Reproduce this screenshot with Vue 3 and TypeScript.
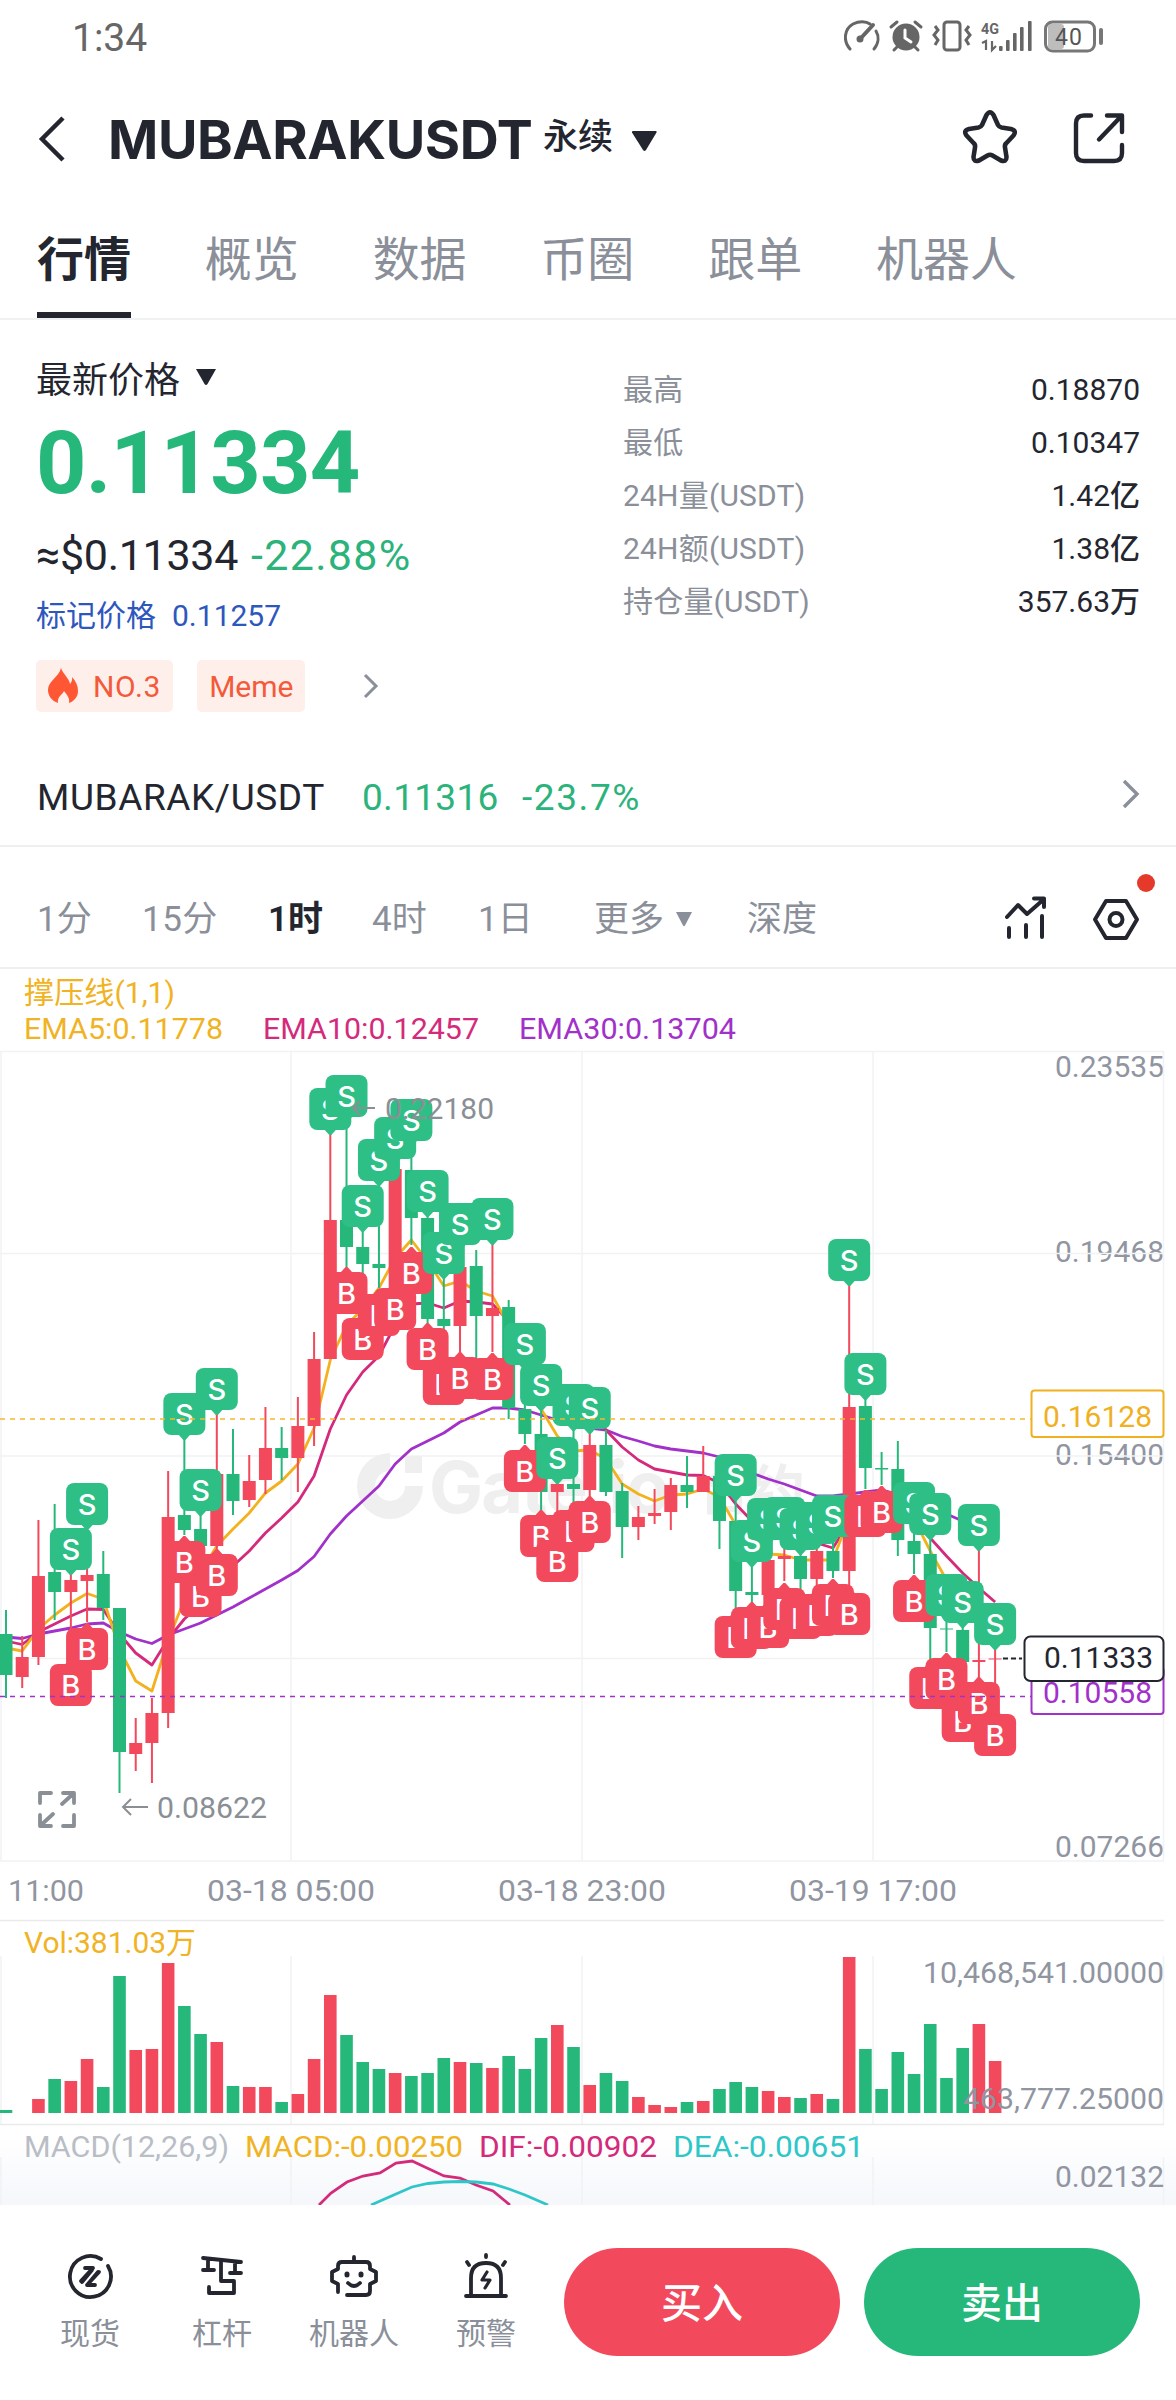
<template>
  <div class="page">
    <!-- 状态栏 -->
    <div class="status">
      <span class="clock">1:34</span>
      <svg class="status-icons" width="262" height="34" viewBox="844 19 262 34">
        <g fill="none" stroke="#666" stroke-width="3" stroke-linecap="round">
          <path d="M850 49 C843 41 844 29 853 24 C859 21 866 21 870 24" />
          <path d="M874 49 C879 43 879 36 876 31" />
          <path d="M861 38 L873 25" stroke-width="4" />
          <circle cx="860" cy="39" r="2" fill="#666" />
        </g>
        <g stroke="#666" stroke-linecap="round">
          <circle cx="906" cy="37" r="13.5" fill="#666" stroke="none" />
          <path d="M891 27 L897 22 M921 27 L915 22 M897 47 L894 50 M915 47 L918 50" stroke-width="3" fill="none" />
          <path d="M905 30 V38 L911 42" stroke="#fff" stroke-width="3" fill="none" />
        </g>
        <g fill="none" stroke="#666" stroke-width="3">
          <rect x="944" y="22" width="16" height="28" rx="3" />
          <path d="M935 26 L938 30 L934 35 L938 40 L935 45 M969 26 L966 30 L970 35 L966 40 L969 45" stroke-width="3" />
        </g>
        <text x="981" y="34" class="net" textLength="18" lengthAdjust="spacingAndGlyphs">4G</text>
        <path d="M982 43 L986 41 V50 M992 41 V50 L996 46" fill="none" stroke="#666" stroke-width="2.2" />
        <g fill="#666">
          <rect x="999" y="46" width="3.6" height="5" rx="1" />
          <rect x="1006" y="40" width="3.6" height="11" rx="1" />
          <rect x="1013" y="33" width="3.6" height="18" rx="1" />
          <rect x="1020" y="27" width="3.6" height="24" rx="1" />
          <rect x="1028" y="21" width="3.6" height="30" rx="1" />
        </g>
        <rect x="1048" y="24" width="16" height="25" rx="3" fill="#bdbdbd" />
        <rect x="1045.500" y="22" width="49" height="29" rx="7" fill="none" stroke="#777" stroke-width="3" />
        <rect x="1099" y="28" width="4" height="17" rx="2" fill="#777" />
        <text x="1055" y="45" class="battery" textLength="27">40</text>
      </svg>
    </div>

    <!-- 标题 -->
    <header class="header">
      <svg class="back" width="30" height="50" viewBox="0 0 30 50">
        <path d="M26 4 L5 25 L26 46" fill="none" stroke="#23262f" stroke-width="4.500" />
      </svg>
      <h1>MUBARAKUSDT</h1>
      <span class="kind">永续</span>
      <svg class="caret" width="27" height="22" viewBox="0 0 27 22">
        <path d="M2 1 H25 Q26 1 25.500 2.500 L15 20 Q13.500 22 12 20 L1 2.500 Q.500 1 2 1Z" fill="#23262f" />
      </svg>
      <svg class="star" width="60" height="60" viewBox="0 0 60 60">
        <path
          d="M26.500 8 Q30 2.500 33.500 8 L38 18 Q39 20 41.500 20.500 L51 22 Q57 23.500 53.500 28.500 L46 36.500 Q44.500 38 45 40.500 L46.500 50 Q46.500 55.500 41 53.500 L32.500 48.500 Q30 47 27.500 48.500 L19 53.500 Q13.500 55.500 13.500 50 L15 40.500 Q15.500 38 14 36.500 L6.500 28.500 Q3 23.500 9 22 L18.500 20.500 Q21 20 22 18 Z"
          fill="none" stroke="#23262f" stroke-width="4.600" stroke-linejoin="round" />
      </svg>
      <svg class="share" width="54" height="54" viewBox="0 0 54 54">
        <g fill="none" stroke="#23262f" stroke-width="4.400" stroke-linecap="round" stroke-linejoin="round">
          <path d="M19 4.500 H12 Q4 4.500 4 12.500 V42 Q4 50 12 50 H42 Q50 50 50 42 V34" />
          <path d="M35 4.500 H50 V21 M49 5.500 L27 28.500" />
        </g>
      </svg>
    </header>

    <nav class="tabs">
      <span v-for="(t, i) in tabs" :key="t" :class="{ active: i === 0 }">{{ t }}</span>
    </nav>

    <!-- 价格信息 -->
    <section class="quote">
      <div class="left">
        <div class="last-label">
          最新价格
          <svg width="22" height="18" viewBox="0 0 22 18"><path d="M1 1 H21 L12.500 16 Q11 18 9.500 16Z" fill="#23262f" /></svg>
        </div>
        <div class="last">0.11334</div>
        <div class="approx"><span>≈$0.11334</span><span class="green pct">-22.88%</span></div>
        <div class="mark">标记价格<span>0.11257</span></div>
        <div class="tags">
          <span class="tag">
            <svg width="32" height="36" viewBox="0 0 32 36">
              <path
                d="M14 0 C16 6 22 10 23 16 C25 14 25.500 11 25 9 C29 13 31 18 31 23 C31 29 27 33 22 35 C23 30 20 27 17 23 C15 27 10 29 11 35 C5 33 1 28 1 22 C1 13 12 9 14 0Z"
                fill="#ff5733" />
            </svg>
            NO.3
          </span>
          <span class="tag meme">Meme</span>
          <svg class="more" width="16" height="26" viewBox="0 0 16 26">
            <path d="M2 2 L13 13 L2 24" fill="none" stroke="#8a8f99" stroke-width="3" />
          </svg>
        </div>
      </div>
      <dl class="stats">
        <div v-for="s in stats" :key="s.label">
          <dt>{{ s.label }}</dt>
          <dd>{{ s.value }}</dd>
        </div>
      </dl>
    </section>

    <section class="spot">
      <span class="pair">MUBARAK/USDT</span>
      <span class="green spot-price">0.11316</span>
      <span class="green spot-pct">-23.7%</span>
      <svg width="18" height="30" viewBox="0 0 18 30">
        <path d="M2 2 L15 15 L2 28" fill="none" stroke="#8a8f99" stroke-width="3.400" />
      </svg>
    </section>

    <!-- 周期 -->
    <section class="periods">
      <span class="p1">1分</span>
      <span class="p2">15分</span>
      <span class="p3 on">1时</span>
      <span class="p4">4时</span>
      <span class="p5">1日</span>
      <span class="p6">更多<svg width="18" height="15" viewBox="0 0 18 15"><path d="M1 0 H17 L10 13.500 Q9 15 8 13.500Z" fill="#8a8f99" /></svg></span>
      <span class="p7">深度</span>
      <svg class="tool-chart" width="44" height="46" viewBox="1004 897 44 46">
        <g fill="none" stroke="#23262f" stroke-width="4" stroke-linecap="round" stroke-linejoin="round">
          <path d="M1007 919 L1018 907 L1027 916 L1043 902 M1034 900.500 H1044 V909" />
          <path d="M1009 930 V939 M1026 927 V939 M1042 918 V939" />
        </g>
      </svg>
      <svg class="tool-hex" width="66" height="74" viewBox="1091 871 66 74">
        <g fill="none" stroke="#23262f" stroke-width="4" stroke-linejoin="round">
          <path d="M1106 901 H1126 L1137 919.500 L1126 938 H1106 L1095 919.500Z" />
          <circle cx="1116" cy="919.500" r="6.500" />
        </g>
        <circle cx="1146" cy="883" r="9" fill="#e53a2b" />
      </svg>
    </section>

    <!-- K线图 -->
    <svg class="chart" width="1176" height="1236" viewBox="0 969 1176 1236">
      <defs>
        <linearGradient id="fade" x1="0" y1="0" x2="0" y2="1">
          <stop offset="0" stop-color="#fff" />
          <stop offset="1" stop-color="#f5f7fb" />
        </linearGradient>
      </defs>
      <rect x="0" y="2135" width="1176" height="70" fill="url(#fade)" />

      <text v-for="l in labels" :key="l.t + l.x" :x="l.x" :y="l.y" :fill="l.c" :textLength="l.w" lengthAdjust="spacingAndGlyphs">{{ l.t }}</text>

      <g stroke="#f1f2f4" stroke-width="1.500">
        <path d="M0 1051.500 H1164 M0 1253.500 H1164 M0 1456 H1164 M0 1658.500 H1164 M0 1861 H1164" />
        <path v-for="x in gridX" :key="x" :d="`M${x} 1051 V1861 M${x} 1956 V2124 M${x} 2157 V2205`" />
        <path d="M0 1920.500 H1164 M0 2124.500 H1164" stroke="#e9eaec" />
      </g>

      <!-- 水印 -->
      <g fill="#efefef">
        <path d="M390 1453 A33 33 0 1 0 423 1486 H405 A15 15 0 1 1 390 1471Z" />
        <rect x="405" y="1456" width="17" height="17" />
        <text x="429" y="1513" class="wm" textLength="241">Gate.io</text>
        <text x="697" y="1510" class="wm cn" textLength="108">合约</text>
      </g>

      <g fill="none" stroke-width="2.800" stroke-linejoin="round">
        <polyline :points="ema30" stroke="#a131c9" />
        <polyline :points="ema10" stroke="#d42a7c" />
        <polyline :points="ema5" stroke="#f2b11d" />
      </g>

      <g v-for="(k, i) in candles" :key="'k' + i" :fill="k[0] ? RED : GREEN">
        <rect :x="cx(i) - 1" :y="k[1]" width="2" :height="k[4] - k[1]" />
        <rect :x="cx(i) - 6.500" :y="k[2]" width="13" :height="k[3] - k[2]" />
      </g>

      <!-- 买卖点 -->
      <g v-for="(b, n) in badges" :key="'b' + n" :transform="`translate(${cx(b.i)} ${b.y})`">
        <rect x="-21" y="0" width="42" height="42" rx="8" :fill="b.side === 'S' ? '#2ebf86' : RED" />
        <path v-if="b.side === 'S'" d="M-6 41.500 H6 L1 47 H-1Z" fill="#2ebf86" />
        <path v-else d="M-6 .500 H6 L1 -5 H-1Z" :fill="RED" />
        <text x="0" y="32" class="side">{{ b.side }}</text>
      </g>

      <g fill="none" stroke-width="1.700">
        <path d="M0 1419 H1031" stroke="#f5b82e" stroke-dasharray="5 5" />
        <path d="M0 1696.500 H1031" stroke="#a131c9" stroke-dasharray="5 5" />
        <path d="M1003 1658.500 H1022" stroke="#23262f" stroke-dasharray="5 3" stroke-width="2" />
      </g>
      <g fill="#fff" stroke-width="2">
        <rect x="1031.500" y="1390.500" width="132" height="46.500" rx="3" stroke="#f0b01f" />
        <rect x="1031.500" y="1667.500" width="132" height="46.500" rx="3" stroke="#a131c9" />
      </g>
      <text x="1043" y="1427" fill="#f0b01f" textLength="109" lengthAdjust="spacingAndGlyphs">0.16128</text>
      <text x="1043" y="1703" fill="#a131c9" textLength="109" lengthAdjust="spacingAndGlyphs">0.10558</text>
      <rect x="1024.500" y="1636.500" width="139" height="44.500" rx="6" fill="#fff" stroke="#23262f" stroke-width="2" />
      <text x="1044" y="1668" fill="#23262f" textLength="109" lengthAdjust="spacingAndGlyphs">0.11333</text>

      <!-- 最高最低标注、全屏 -->
      <g fill="none" stroke="#8a8f96" stroke-width="2">
        <path d="M375 1108 H353 M360 1101 L353 1108 L360 1115" />
        <path d="M148 1807 H123 M131 1799 L123 1807 L131 1815" />
        <path
          d="M40 1803 V1793 H51 M63 1793 H74 V1803 M74 1793 L62 1804 M40 1815 V1826 H51 M40 1826 L53 1814 M63 1826 H74 V1815"
          stroke-width="3.800" stroke-linecap="round" stroke-linejoin="round" />
      </g>

      <!-- 成交量 -->
      <template v-for="(v, i) in volumes" :key="'v' + i">
        <rect v-if="v" :x="cx(i) - 6.300" :y="v" width="12.600" :height="2113 - v" :fill="candles[i][0] ? RED : GREEN" />
      </template>
      <text v-for="l in overLabels" :key="l.t" :x="l.x" :y="l.y" :fill="l.c" :textLength="l.w" lengthAdjust="spacingAndGlyphs">{{ l.t }}</text>

      <g fill="none" stroke-width="2.800">
        <polyline points="319,2205 331,2193 347,2182 363,2176 380,2173 396,2163 412,2161 427,2168 444,2176 460,2178 476,2185 493,2191 510,2205" stroke="#d42a7c" />
        <polyline points="371,2205 396,2194 412,2187 428,2183.500 444,2182 460,2181.500 476,2182 493,2184 509,2189 525,2195 548,2205" stroke="#2fc6c8" />
      </g>
    </svg>

    <!-- 底部操作栏 -->
    <footer class="bottom">
      <div class="entry">
        <svg width="50" height="50" viewBox="65 2250 50 50">
          <g fill="none" stroke="#23262f" stroke-width="3.800" stroke-linecap="round" stroke-linejoin="round">
            <path d="M101 2259 A20.500 20.500 0 1 0 108 2266" />
            <path d="M85 2268 H93 L81 2281 M95 2285 H87 L99 2272 M92 2270 L82 2282 M88 2284 L98 2272" />
          </g>
        </svg>
        <span>现货</span>
      </div>
      <div class="entry">
        <svg width="50" height="50" viewBox="197 2250 50 50">
          <g fill="none" stroke="#23262f" stroke-width="3.800" stroke-linecap="round" stroke-linejoin="round">
            <path d="M203 2258 L241 2262 M208 2259 V2269 M235 2262 V2273 M203 2270 H214 M230 2273 H241" />
            <path d="M221 2261 V2281 H234 V2293 H209 V2287" />
          </g>
        </svg>
        <span>杠杆</span>
      </div>
      <div class="entry">
        <svg width="50" height="50" viewBox="329 2250 50 50">
          <g fill="none" stroke="#23262f" stroke-width="3.800" stroke-linecap="round" stroke-linejoin="round">
            <path d="M354 2257 V2262 M338 2292 V2284 L332 2281 V2272 L338 2269 V2266 Q338 2262 342 2262 H366 Q370 2262 370 2266 V2269 L376 2272 V2281 L370 2284 V2291 Q370 2295 366 2295 H347" />
            <path d="M347 2274 V2275 M361 2274 V2275" stroke-width="5" />
            <path d="M348 2283 Q354 2289 360 2283" />
          </g>
        </svg>
        <span>机器人</span>
      </div>
      <div class="entry">
        <svg width="50" height="50" viewBox="461 2250 50 50">
          <g fill="none" stroke="#23262f" stroke-width="3.800" stroke-linecap="round" stroke-linejoin="round">
            <path d="M466 2296 H506 M471 2295 V2278 Q471 2263 486 2263 Q501 2263 501 2278 V2295 M486 2255 V2257 M467 2262 L469 2265 M505 2262 L503 2265" />
            <path d="M487 2272 L482 2280 H490 L485 2288" stroke-width="3.200" />
          </g>
        </svg>
        <span>预警</span>
      </div>
      <button class="buy">买入</button>
      <button class="sell">卖出</button>
    </footer>
  </div>
</template>

<script lang="ts" setup>
const GREEN = '#25b87a'
const RED = '#f2495d'

const tabs = ['行情', '概览', '数据', '币圈', '跟单', '机器人']

const stats = [
  { label: '最高', value: '0.18870' },
  { label: '最低', value: '0.10347' },
  { label: '24H量(USDT)', value: '1.42亿' },
  { label: '24H额(USDT)', value: '1.38亿' },
  { label: '持仓量(USDT)', value: '357.63万' },
]

const gridX = [1, 291, 582, 873, 1163.5]

// 第 i 根K线的中心 x
const cx = (i: number) => 6 + i * 16.215

interface Label { t: string; x: number; y: number; w: number; c: string }

const yellow = '#f0b323'
const pink = '#d42a7c'
const grey = '#9095a1'

const labels: Label[] = [
  { t: '撑压线(1,1)', x: 24, y: 1003, w: 151, c: yellow },
  { t: 'EMA5:0.11778', x: 24, y: 1039, w: 199, c: yellow },
  { t: 'EMA10:0.12457', x: 263, y: 1039, w: 216, c: pink },
  { t: 'EMA30:0.13704', x: 519, y: 1039, w: 217, c: '#a131c9' },
  { t: '0.23535', x: 1055, y: 1077, w: 109, c: grey },
  { t: '0.19468', x: 1055, y: 1262, w: 109, c: grey },
  { t: '0.15400', x: 1055, y: 1465, w: 109, c: grey },
  { t: '0.07266', x: 1055, y: 1857, w: 109, c: grey },
  { t: '11:00', x: 8, y: 1901, w: 76, c: grey },
  { t: '03-18 05:00', x: 207, y: 1901, w: 168, c: grey },
  { t: '03-18 23:00', x: 498, y: 1901, w: 168, c: grey },
  { t: '03-19 17:00', x: 789, y: 1901, w: 168, c: grey },
  { t: 'Vol:381.03万', x: 24, y: 1953, w: 172, c: yellow },
  { t: 'MACD(12,26,9)', x: 24, y: 2157, w: 205, c: '#b9bdc5' },
  { t: 'MACD:-0.00250', x: 245, y: 2157, w: 218, c: yellow },
  { t: 'DIF:-0.00902', x: 479, y: 2157, w: 178, c: pink },
  { t: 'DEA:-0.00651', x: 673, y: 2157, w: 191, c: '#2fc6c8' },
]

// 盖在图形上面的文字
const overLabels: Label[] = [
  { t: '0.22180', x: 385, y: 1119, w: 109, c: '#8a8f96' },
  { t: '0.08622', x: 157, y: 1818, w: 110, c: '#8a8f96' },
  { t: '10,468,541.00000', x: 923, y: 1983, w: 241, c: grey },
  { t: '463,777.25000', x: 963, y: 2109, w: 201, c: grey },
  { t: '0.02132', x: 1055, y: 2187, w: 109, c: grey },
]

// [红?, 最高, 实体上, 实体下, 最低]
const candles: number[][] = [
  [0, 1610, 1634, 1675, 1698], [1, 1636, 1657, 1677, 1688], [1, 1520, 1576, 1657, 1665],
  [0, 1504, 1572, 1592, 1620], [1, 1570, 1580, 1592, 1662], [1, 1527, 1575, 1581, 1622],
  [0, 1551, 1574, 1608, 1620], [0, 1608, 1608, 1752, 1793], [1, 1718, 1743, 1754, 1771],
  [1, 1698, 1713, 1743, 1783], [1, 1471, 1517, 1713, 1728], [0, 1437, 1515, 1530, 1535],
  [0, 1512, 1529, 1546, 1572], [1, 1412, 1474, 1546, 1549], [0, 1429, 1474, 1501, 1515],
  [1, 1455, 1481, 1500, 1507], [1, 1407, 1448, 1480, 1494], [0, 1427, 1448, 1458, 1480],
  [1, 1397, 1426, 1458, 1492], [1, 1332, 1359, 1426, 1446], [1, 1132, 1220, 1359, 1359],
  [0, 1117, 1220, 1247, 1267], [0, 1228, 1247, 1264, 1317], [0, 1182, 1264, 1268, 1288],
  [1, 1158, 1169, 1290, 1290], [0, 1140, 1170, 1218, 1245], [0, 1215, 1218, 1319, 1323],
  [0, 1277, 1319, 1326, 1362], [1, 1243, 1267, 1326, 1352], [0, 1250, 1266, 1316, 1358],
  [1, 1240, 1308, 1316, 1352], [0, 1300, 1307, 1408, 1419], [0, 1365, 1409, 1434, 1444],
  [0, 1407, 1434, 1492, 1510], [1, 1480, 1484, 1492, 1542], [0, 1428, 1484, 1489, 1511],
  [1, 1430, 1445, 1490, 1496], [0, 1430, 1445, 1492, 1496], [0, 1483, 1491, 1527, 1558],
  [1, 1506, 1517, 1527, 1540], [1, 1489, 1513, 1516, 1524], [1, 1478, 1485, 1512, 1530],
  [0, 1456, 1485, 1492, 1508], [1, 1446, 1476, 1492, 1492], [0, 1476, 1476, 1521, 1549],
  [0, 1498, 1521, 1591, 1616], [0, 1562, 1592, 1595, 1602], [1, 1550, 1560, 1595, 1606],
  [1, 1548, 1556, 1559, 1581], [0, 1550, 1556, 1579, 1597], [1, 1548, 1551, 1579, 1594],
  [0, 1540, 1551, 1571, 1578], [1, 1283, 1407, 1571, 1593], [0, 1397, 1406, 1468, 1489],
  [0, 1452, 1468, 1469.5, 1485], [0, 1441, 1469, 1540, 1556], [0, 1520, 1541, 1554, 1574],
  [0, 1535, 1554, 1628, 1667], [0, 1618, 1628.5, 1629.5, 1652], [0, 1622, 1630, 1662, 1700],
  [1, 1550, 1660, 1662, 1678], [1, 1650, 1658.5, 1659.5, 1714],
]

const volumes = [
  2110, 0, 2099, 2079, 2081, 2059, 2087, 1976, 2050, 2049, 1963, 2006, 2034, 2042, 2086, 2087,
  2087, 2102, 2094, 2059, 1995, 2035, 2062, 2069, 2073, 2076, 2073, 2058, 2062, 2063, 2068, 2056,
  2069, 2038, 2025, 2047, 2085, 2073, 2081, 2097, 2105, 2107, 2102, 2101, 2089, 2082, 2087, 2091,
  2097, 2098, 2094, 2099, 1957, 2049, 2089, 2052, 2074, 2024, 2078, 2048, 2024, 2061,
]

// K线序号 -> 标记顶部 y
const sells: Record<number, number> = {
  4: 1528, 5: 1483, 11: 1393, 12: 1469, 13: 1368, 20: 1088, 21: 1075, 22: 1185, 23: 1139,
  24: 1117, 25: 1099, 26: 1170, 27: 1232, 28: 1203, 30: 1198, 32: 1323, 33: 1364, 34: 1437,
  35: 1384, 36: 1387, 45: 1454, 46: 1520, 47: 1498, 48: 1497, 49: 1508, 50: 1502, 51: 1495,
  52: 1239, 53: 1353, 56: 1482, 57: 1493, 58: 1574, 59: 1581, 60: 1504, 61: 1603,
}
const buys: Record<number, number> = {
  4: 1664, 5: 1628, 11: 1541, 12: 1575, 13: 1554, 21: 1272, 22: 1318, 23: 1294, 24: 1288,
  25: 1252, 26: 1328, 27: 1363, 28: 1357, 30: 1358, 32: 1450, 33: 1515, 34: 1540,
  35: 1510, 36: 1501, 45: 1616, 46: 1607, 47: 1606, 48: 1588, 49: 1597, 50: 1594, 51: 1584,
  52: 1593, 53: 1495, 54: 1491, 56: 1580, 57: 1667, 58: 1658, 59: 1700, 60: 1682, 61: 1714,
}

const badges: { i: number; y: number; side: 'S' | 'B' }[] = []
candles.forEach((_, i) => {
  if (sells[i]) badges.push({ i, y: sells[i], side: 'S' })
  if (buys[i]) badges.push({ i, y: buys[i], side: 'B' })
})

// 均线，每根K线一个点
const line = (ys: number[]) => ys.map((y, i) => `${cx(i)},${y}`).join(' ')

const ema5 = line([
  1648, 1651, 1629, 1615, 1603, 1593.5, 1599, 1649, 1681, 1691, 1640, 1600, 1572, 1546, 1529,
  1513, 1493, 1481, 1464, 1428, 1360, 1325, 1309, 1288, 1258, 1240, 1261, 1286, 1281, 1291,
  1296, 1325, 1365, 1409, 1436, 1451, 1450, 1459, 1484, 1494, 1501, 1495, 1494, 1489, 1497,
  1525, 1545, 1554, 1555, 1560, 1560, 1560, 1517, 1495, 1492, 1494, 1519, 1551, 1580, 1605, 1620, 1632,
])
const ema10 = line([
  1641, 1644.5, 1632, 1624, 1616, 1609, 1609.5, 1634, 1653, 1665, 1639, 1619, 1605, 1586, 1566,
  1551, 1533, 1518, 1502, 1476, 1429, 1395, 1372, 1356, 1325, 1304, 1303, 1308, 1301, 1302,
  1304, 1321, 1350, 1378, 1395, 1403, 1410, 1430, 1447, 1460, 1469, 1472, 1475, 1475.5, 1483,
  1504, 1521, 1534, 1540, 1543, 1543, 1548, 1522, 1503, 1498, 1500, 1518, 1538, 1556, 1573, 1588, 1602,
])
const ema30 = line([
  1637, 1638.5, 1634, 1631, 1628, 1624, 1623, 1632, 1639, 1643.5, 1635, 1629, 1623, 1615, 1607,
  1598, 1589, 1580, 1570.5, 1556.5, 1534, 1516, 1501, 1486, 1464, 1449, 1441, 1433, 1422, 1415,
  1408, 1408, 1410, 1415, 1420, 1425, 1428, 1430, 1436.5, 1441, 1446, 1449, 1451, 1453, 1457,
  1465, 1473, 1479, 1484, 1490, 1496, 1496, 1494, 1492, 1490, 1494, 1502, 1508, 1514, 1521, 1527, 1533,
])
</script>

<style>
body {
  margin: 0;
  background: #fff;
}
</style>

<style scoped>
.page {
  width: 1176px;
  height: 2400px;
  overflow: hidden;
  background: #fff;
  color: #23262f;
  font-family: Roboto, "Noto Sans CJK SC", sans-serif;
  display: flex;
  flex-direction: column;
}

svg {
  flex: none;
  display: block;
}

.green {
  color: #2cb37c;
}

.status {
  height: 72px;
  padding: 0 70px 0 72px;
  display: flex;
  align-items: center;
  justify-content: space-between;
  box-sizing: border-box;
}

.clock {
  margin-top: 3px;
  font-size: 39px;
  color: #666;
}

.net {
  font: 700 15px Roboto, sans-serif;
  fill: #666;
}

.battery {
  font: 400 23px Roboto, sans-serif;
  fill: #555;
}

.header {
  height: 130px;
  display: flex;
  align-items: center;
  box-sizing: border-box;
  padding: 4px 50px 0 37px;
}

h1 {
  margin: 2px 0 0 41px;
  width: 435px;
  font: 650 54px/1 Inter, sans-serif;
  letter-spacing: -.4px;
}

.kind {
  font-size: 35px;
  line-height: 50px;
  font-weight: 500;
  width: 88px;
  margin-bottom: 3px;
}

.caret {
  margin-top: 4px;
}

.star {
  margin-left: auto;
  margin-right: 52px;
  margin-bottom: 4px;
}

.share {
  margin-bottom: 3px;
}

.tabs {
  height: 118px;
  padding: 0 37px;
  display: flex;
  gap: 74px;
  box-sizing: border-box;
  border-bottom: 2px solid #f0f1f3;
}

.tabs span {
  height: 110px;
  font-size: 47px;
  line-height: 116px;
  letter-spacing: -.1px;
  color: #8a8f99;
}

.tabs .active {
  color: #23262f;
  font-weight: 700;
  border-bottom: 6px solid #23262f;
}

.quote {
  height: 417px;
  display: flex;
  justify-content: space-between;
  padding: 0 36px;
}

.last-label {
  display: flex;
  align-items: center;
  gap: 15px;
  height: 48px;
  margin-top: 33px;
  font-size: 36px;
}

.last {
  height: 96px;
  margin-top: 14px;
  font-size: 88px;
  line-height: 96px;
  font-weight: 700;
  letter-spacing: -.7px;
  color: #25b87a;
}

.approx {
  margin-top: 19px;
  height: 50px;
  line-height: 50px;
  font-size: 43px;
  display: flex;
  gap: 13px;
  font-weight: 450;
  letter-spacing: -.3px;
}

.pct {
  letter-spacing: 1.3px;
}

.mark {
  margin-top: 14px;
  height: 44px;
  line-height: 44px;
  font-size: 30px;
  color: #2e57bd;
}

.mark span {
  margin-left: 16px;
}

.tags {
  margin-top: 22px;
  display: flex;
  align-items: center;
}

.tag {
  height: 52px;
  padding: 0 12px 0 11px;
  display: flex;
  align-items: center;
  gap: 14px;
  border-radius: 5px;
  background: #feefeb;
  color: #f4593a;
  font-size: 30px;
  letter-spacing: .7px;
}

.meme {
  margin-left: 24px;
  padding: 0 12px;
  letter-spacing: 0;
}

.more {
  margin-left: 58px;
}

.stats {
  width: 517px;
  margin: 43px 0 0;
}

.stats div {
  height: 53px;
  line-height: 53px;
  display: flex;
  justify-content: space-between;
  font-size: 30px;
}

.stats dt {
  color: #8a8f99;
  letter-spacing: .2px;
}

.stats dd {
  margin: 0;
  font-weight: 450;
}

.spot {
  height: 110px;
  padding: 5px 36px 0 37px;
  display: flex;
  align-items: center;
  font-size: 37px;
  line-height: 44px;
  letter-spacing: .6px;
  border-bottom: 2px solid #eeeff1;
  box-sizing: border-box;
}

.spot span {
  padding-top: 9px;
}

.spot-price,
.spot-pct {
  font-weight: 450;
}

.pair {
  width: 325px;
}

.spot-price {
  width: 160px;
  letter-spacing: .3px;
}

.spot-pct {
  letter-spacing: 1.6px;
}

.spot svg {
  margin-left: auto;
}

.periods {
  height: 122px;
  padding: 17px 19px 0 37px;
  display: flex;
  align-items: center;
  font-size: 35px;
  line-height: 50px;
  color: #8a8f99;
  border-bottom: 2px solid #eeeff1;
  box-sizing: border-box;
}

.periods span {
  padding-top: 8px;
}

.p1 { width: 105px; }
.p2 { width: 126px; letter-spacing: .5px; }
.p3 { width: 104px; }
.p4 { width: 106px; }
.p5 { width: 116px; }
.p6 { width: 153px; display: flex; align-items: center; gap: 11px; }

.on {
  color: #23262f;
  font-weight: 600;
}

.tool-chart {
  margin-left: auto;
  margin-right: 43px;
  margin-top: 4px;
}

.tool-hex {
  margin-bottom: 16px;
}

.chart text {
  font: 400 30px Roboto, "Noto Sans CJK SC", sans-serif;
}

.chart .side {
  font: 500 29px Inter, sans-serif;
  fill: #fff;
  text-anchor: middle;
}

.chart .wm {
  font: 700 72px Inter, "Noto Sans CJK SC", sans-serif;
}

.chart .cn {
  font-size: 54px;
}

.bottom {
  flex: 1;
  display: flex;
  padding: 43px 36px 0 24px;
}

.entry {
  width: 132px;
  display: flex;
  flex-direction: column;
  align-items: center;
  font-size: 30px;
  line-height: 40px;
  color: #8a8f99;
}

.entry svg {
  margin-top: 2px;
}

.entry span {
  margin-top: 14px;
}

button {
  width: 276px;
  height: 108px;
  padding: 0 0 5px;
  border: none;
  border-radius: 54px;
  color: #fff;
  font: 500 41px "Noto Sans CJK SC", sans-serif;
}

.buy {
  margin-left: 12px;
  background: #f2495d;
}

.sell {
  margin-left: 24px;
  background: #25b87a;
}
</style>
